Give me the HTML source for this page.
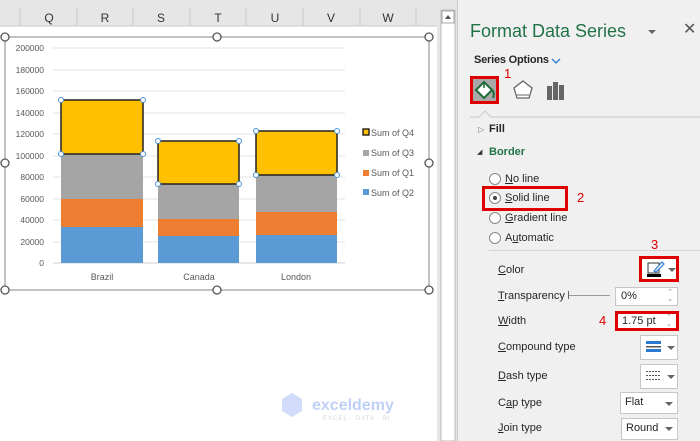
<!DOCTYPE html>
<html><head><meta charset="utf-8"><style>
*{margin:0;padding:0;box-sizing:border-box}
body{width:700px;height:441px;overflow:hidden;background:#fff;font-family:"Liberation Sans",sans-serif;position:relative}
.a{position:absolute}
.p{font-size:11px;color:#262626;white-space:nowrap}
.box{position:absolute;background:#fff;border:1px solid #c6c6c6}
.red{border:3px solid #e00000}
.num{position:absolute;color:#e00000;font-size:13px}
.dd{position:absolute;width:0;height:0;border-left:4px solid transparent;border-right:4px solid transparent;border-top:4px solid #666}
.spin{position:absolute;right:4px;font-size:7px;color:#888;line-height:7px}
.rad{position:absolute;width:12px;height:12px;border-radius:50%;border:1px solid #888;background:#fff}
u{text-decoration:underline}
</style></head><body>
<svg class="a" style="left:0;top:0" width="457" height="441">
<rect x="0" y="0" width="457" height="26" fill="#e6e6e6"/>
<line x1="0" y1="26" x2="437" y2="26" stroke="#c8c8c8"/>
<g stroke="#c8c8c8"><line x1="20" y1="8" x2="20" y2="26"/><line x1="77" y1="8" x2="77" y2="26"/><line x1="133" y1="8" x2="133" y2="26"/><line x1="190" y1="8" x2="190" y2="26"/><line x1="246" y1="8" x2="246" y2="26"/><line x1="303" y1="8" x2="303" y2="26"/><line x1="360" y1="8" x2="360" y2="26"/><line x1="416" y1="8" x2="416" y2="26"/></g>
<g font-size="12" fill="#333" text-anchor="middle" font-family="Liberation Sans"><text x="49" y="22">Q</text><text x="105" y="22">R</text><text x="161" y="22">S</text><text x="218" y="22">T</text><text x="275" y="22">U</text><text x="331" y="22">V</text><text x="388" y="22">W</text></g>
<rect x="437" y="0" width="20" height="441" fill="#e6e6e6"/>
<rect x="441" y="10" width="14" height="431" fill="#fff" stroke="#bbb"/>
<rect x="442" y="11" width="12" height="12" fill="#fff" stroke="#aaa"/>
<path d="M445 19 L448 15 L451 19Z" fill="#555"/>
<rect x="5" y="37" width="424" height="253" fill="#fff" stroke="#999" stroke-width="1.2"/>
<g stroke="#e3e3e3"><line x1="53" y1="48" x2="345" y2="48"/><line x1="53" y1="70" x2="345" y2="70"/><line x1="53" y1="91" x2="345" y2="91"/><line x1="53" y1="113" x2="345" y2="113"/><line x1="53" y1="134" x2="345" y2="134"/><line x1="53" y1="156" x2="345" y2="156"/><line x1="53" y1="177" x2="345" y2="177"/><line x1="53" y1="199" x2="345" y2="199"/><line x1="53" y1="220" x2="345" y2="220"/><line x1="53" y1="242" x2="345" y2="242"/></g>
<line x1="53" y1="263" x2="345" y2="263" stroke="#d0d0d0"/>
<g font-size="8.5" fill="#595959" text-anchor="end" font-family="Liberation Sans"><text x="44" y="51">200000</text><text x="44" y="73">180000</text><text x="44" y="94">160000</text><text x="44" y="116">140000</text><text x="44" y="137">120000</text><text x="44" y="159">100000</text><text x="44" y="180">80000</text><text x="44" y="202">60000</text><text x="44" y="223">40000</text><text x="44" y="245">20000</text><text x="44" y="266">0</text></g>
<rect x="61" y="227" width="82" height="36" fill="#5b9bd5"/><rect x="61" y="199" width="82" height="28" fill="#ed7d31"/><rect x="61" y="154" width="82" height="45" fill="#a5a5a5"/><rect x="61" y="100" width="82" height="54" fill="#ffc000" stroke="#222" stroke-width="1.5"/>
<rect x="158" y="236" width="81" height="27" fill="#5b9bd5"/><rect x="158" y="219" width="81" height="17" fill="#ed7d31"/><rect x="158" y="184" width="81" height="35" fill="#a5a5a5"/><rect x="158" y="141" width="81" height="43" fill="#ffc000" stroke="#222" stroke-width="1.5"/>
<rect x="256" y="235" width="81" height="28" fill="#5b9bd5"/><rect x="256" y="212" width="81" height="23" fill="#ed7d31"/><rect x="256" y="175" width="81" height="37" fill="#a5a5a5"/><rect x="256" y="131" width="81" height="44" fill="#ffc000" stroke="#222" stroke-width="1.5"/>
<g fill="#fff" stroke="#4a90d9" stroke-width="1"><circle cx="61" cy="100" r="2.5"/><circle cx="143" cy="100" r="2.5"/><circle cx="61" cy="154" r="2.5"/><circle cx="143" cy="154" r="2.5"/><circle cx="158" cy="141" r="2.5"/><circle cx="239" cy="141" r="2.5"/><circle cx="158" cy="184" r="2.5"/><circle cx="239" cy="184" r="2.5"/><circle cx="256" cy="131" r="2.5"/><circle cx="337" cy="131" r="2.5"/><circle cx="256" cy="175" r="2.5"/><circle cx="337" cy="175" r="2.5"/></g>
<g font-size="9" fill="#595959" text-anchor="middle" font-family="Liberation Sans"><text x="102" y="280">Brazil</text><text x="199" y="280">Canada</text><text x="296" y="280">London</text></g>
<rect x="363" y="129" width="6" height="6" fill="#ffc000" stroke="#111" stroke-width="1.3"/><rect x="363" y="150" width="6" height="6" fill="#a5a5a5"/><rect x="363" y="170" width="6" height="6" fill="#ed7d31"/><rect x="363" y="189" width="6" height="6" fill="#5b9bd5"/>
<g font-size="9" fill="#595959" font-family="Liberation Sans"><text x="371" y="136">Sum of Q4</text><text x="371" y="156">Sum of Q3</text><text x="371" y="176">Sum of Q1</text><text x="371" y="196">Sum of Q2</text></g>
<g fill="#fff" stroke="#555" stroke-width="1.3"><circle cx="5" cy="37" r="4"/><circle cx="217" cy="37" r="4"/><circle cx="429" cy="37" r="4"/><circle cx="5" cy="163" r="4"/><circle cx="429" cy="163" r="4"/><circle cx="5" cy="290" r="4"/><circle cx="217" cy="290" r="4"/><circle cx="429" cy="290" r="4"/></g>
<g opacity="0.35"><path d="M282 399 L292 393 L302 399 L302 411 L292 417 L282 411Z" fill="#7a9cf0"/><text x="312" y="410" font-size="16" fill="#4d79e8" font-family="Liberation Sans" font-weight="bold">exceldemy</text><text x="323" y="420" font-size="6" fill="#888" font-family="Liberation Sans" letter-spacing="1">EXCEL · DATA · BI</text></g>
</svg>
<div class="a" style="left:457px;top:0;width:243px;height:441px;background:#f0f0f0;border-left:1px solid #c8c8c8"></div>
<div class="a" style="left:470px;top:21px;font-size:18px;color:#217346">Format Data Series</div>
<div class="dd" style="left:648px;top:30px"></div>
<div class="a" style="left:683px;top:19px;font-size:16px;color:#555">✕</div>
<div class="a" style="left:474px;top:54px;font-size:11px;font-weight:bold;color:#262626;letter-spacing:-0.2px">Series Options</div>
<svg class="a" style="left:551px;top:57px" width="10" height="8"><path d="M1 2 L5 6 L9 2" stroke="#2b79d0" fill="none" stroke-width="1.3"/></svg>
<div class="a" style="left:470px;top:76px;width:29px;height:28px;border:3px solid #e00000;background:#a8a8a8"></div>
<svg class="a" style="left:473px;top:79px" width="23" height="22"><path d="M3 11 L11 3 L19 11 L11 19Z" fill="#fff" stroke="#1f6b3b" stroke-width="2"/><path d="M11 3 L11 9" stroke="#1f6b3b" stroke-width="1.5"/><path d="M19 11 Q22 14 20 19" stroke="#1f6b3b" stroke-width="2" fill="none"/></svg>
<div class="num" style="left:504px;top:66px">1</div>
<svg class="a" style="left:511px;top:79px" width="24" height="22"><path d="M12 2 L21 9 L18 19 L6 19 L3 9Z" fill="#fff" stroke="#666" stroke-width="1.3"/><line x1="6" y1="16" x2="18" y2="16" stroke="#666"/></svg>
<svg class="a" style="left:545px;top:80px" width="22" height="20"><rect x="2" y="6" width="5" height="14" fill="#666"/><rect x="8" y="2" width="5" height="18" fill="#666"/><rect x="14" y="5" width="5" height="15" fill="#666"/></svg>
<svg class="a" style="left:470px;top:108px" width="230" height="12"><path d="M0 9 L9 9 L15 3 L21 9 L230 9" stroke="#c8c8c8" fill="none"/></svg>
<div class="a" style="left:478px;top:125px;font-size:8px;color:#777">▷</div>
<div class="a" style="left:489px;top:123px;font-size:11px;font-weight:bold;color:#262626">Fill</div>
<div class="a" style="left:477px;top:148px;font-size:7px;color:#333">◢</div>
<div class="a" style="left:489px;top:146px;font-size:11px;font-weight:bold;color:#217346">Border</div>
<div class="rad" style="left:489px;top:173px"></div><div class="a p" style="left:505px;top:173px"><u>N</u>o line</div>
<div class="rad" style="left:489px;top:192px"></div><div class="a" style="left:493px;top:196px;width:4px;height:4px;border-radius:50%;background:#444"></div><div class="a p" style="left:505px;top:192px"><u>S</u>olid line</div>
<div class="a" style="left:482px;top:186px;width:86px;height:25px;border:3px solid #e00000"></div>
<div class="num" style="left:577px;top:190px">2</div>
<div class="rad" style="left:489px;top:212px"></div><div class="a p" style="left:505px;top:212px"><u>G</u>radient line</div>
<div class="rad" style="left:489px;top:232px"></div><div class="a p" style="left:505px;top:232px">A<u>u</u>tomatic</div>
<div class="a" style="left:489px;top:250px;width:211px;border-top:1px solid #d6d6d6"></div>
<div class="num" style="left:651px;top:237px">3</div>
<div class="a p" style="left:498px;top:264px"><u>C</u>olor</div>
<div class="box red" style="left:639px;top:256px;width:40px;height:26px"></div>
<svg class="a" style="left:646px;top:260px" width="20" height="18"><rect x="2" y="3" width="11" height="10" fill="#fff" stroke="#333"/><path d="M8 11 L16 2 L18 4 L10 12Z" fill="#fff" stroke="#2b79d0" stroke-width="1.2"/><rect x="1" y="14" width="14" height="3" fill="#000"/></svg>
<div class="dd" style="left:668px;top:268px"></div>
<div class="a p" style="left:498px;top:290px"><u>T</u>ransparency</div>
<div class="a" style="left:568px;top:291px;width:1px;height:8px;background:#666"></div>
<div class="a" style="left:569px;top:295px;width:41px;height:1px;background:#999"></div>
<div class="box" style="left:615px;top:287px;width:63px;height:19px"><span class="a p" style="left:5px;top:2px">0%</span><span class="spin" style="top:1px">⌃<br>⌄</span></div>
<div class="a p" style="left:498px;top:315px"><u>W</u>idth</div>
<div class="num" style="left:599px;top:313px">4</div>
<div class="box red" style="left:615px;top:311px;width:64px;height:20px"><span class="a p" style="left:4px;top:1px">1.75 pt</span><span class="spin" style="top:0px">⌃<br>⌄</span></div>
<div class="a p" style="left:498px;top:341px"><u>C</u>ompound type</div>
<div class="box" style="left:640px;top:335px;width:38px;height:25px"></div>
<svg class="a" style="left:646px;top:340px" width="18" height="14"><rect x="0" y="1" width="15" height="3" fill="#2b79d0"/><rect x="0" y="6" width="15" height="1.5" fill="#555"/><rect x="0" y="9" width="15" height="3" fill="#2b79d0"/></svg>
<div class="dd" style="left:667px;top:346px"></div>
<div class="a p" style="left:498px;top:370px"><u>D</u>ash type</div>
<div class="box" style="left:640px;top:364px;width:38px;height:25px"></div>
<svg class="a" style="left:646px;top:370px" width="18" height="14"><path d="M0 1.5H15M0 5.5H15M0 9.5H15" stroke="#555" stroke-dasharray="2 1"/></svg>
<div class="dd" style="left:667px;top:375px"></div>
<div class="a p" style="left:498px;top:397px">C<u>a</u>p type</div>
<div class="box" style="left:620px;top:392px;width:58px;height:22px"><span class="a p" style="left:4px;top:3px">Flat</span></div>
<div class="dd" style="left:665px;top:402px"></div>
<div class="a p" style="left:498px;top:422px"><u>J</u>oin type</div>
<div class="box" style="left:621px;top:418px;width:57px;height:22px"><span class="a p" style="left:4px;top:3px">Round</span></div>
<div class="dd" style="left:665px;top:427px"></div>
</body></html>
